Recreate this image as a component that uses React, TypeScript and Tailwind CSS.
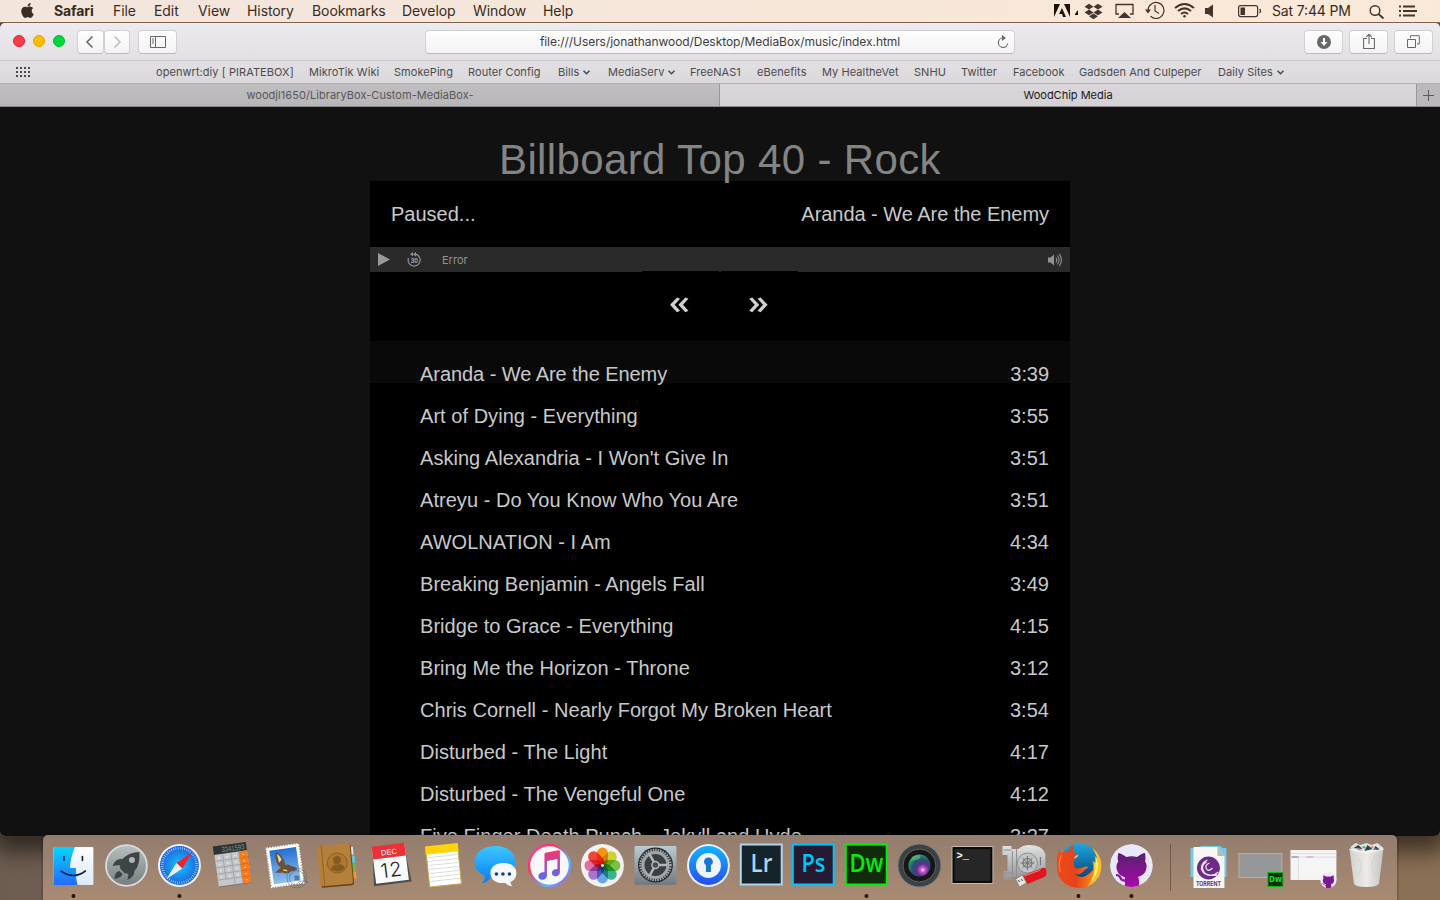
import React from "react";
import { FaApple, FaDropbox } from "react-icons/fa";

const menus = [
  ["File", "w-[41px]"],
  ["Edit", "w-[44px]"],
  ["View", "w-[49px]"],
  ["History", "w-[65px]"],
  ["Bookmarks", "w-[90px]"],
  ["Develop", "w-[71px]"],
  ["Window", "w-[70px]"],
  ["Help", "w-[40px]"],
];

const bookmarks: [string, string, boolean?][] = [
  ["openwrt:diy [ PIRATEBOX]", "w-[153px]"],
  ["MikroTik Wiki", "w-[85px]"],
  ["SmokePing", "w-[74px]"],
  ["Router Config", "w-[90px]"],
  ["Bills", "w-[50px]", true],
  ["MediaServ", "w-[82px]", true],
  ["FreeNAS1", "w-[67px]"],
  ["eBenefits", "w-[65px]"],
  ["My HealtheVet", "w-[92px]"],
  ["SNHU", "w-[47px]"],
  ["Twitter", "w-[52px]"],
  ["Facebook", "w-[66px]"],
  ["Gadsden And Culpeper", "w-[139px]"],
  ["Daily Sites", "w-[70px]", true],
];

const songs = [
  ["Aranda - We Are the Enemy", "3:39"],
  ["Art of Dying - Everything", "3:55"],
  ["Asking Alexandria - I Won't Give In", "3:51"],
  ["Atreyu - Do You Know Who You Are", "3:51"],
  ["AWOLNATION - I Am", "4:34"],
  ["Breaking Benjamin - Angels Fall", "3:49"],
  ["Bridge to Grace - Everything", "4:15"],
  ["Bring Me the Horizon - Throne", "3:12"],
  ["Chris Cornell - Nearly Forgot My Broken Heart", "3:54"],
  ["Disturbed - The Light", "4:17"],
  ["Disturbed - The Vengeful One", "4:12"],
  ["Five Finger Death Punch - Jekyll and Hyde", "3:27"],
];

function MenuBar() {
  return (
    <header className="relative z-10 flex h-[23px] shrink-0 items-center border-b border-[#80634f] bg-linear-to-r from-[#f2e5dc] to-[#fbe9d8] text-[14px] leading-[22px] text-[#3a2b22]">
      <FaApple className="ml-[19px] h-[17px] w-[17px] -translate-y-px" />
      <span className="ml-[18px] w-[59px] whitespace-nowrap font-bold tracking-[-0.100px]">Safari</span>
      {menus.map(([m, w]) => (
        <span key={m} className={`${w} whitespace-nowrap font-normal tracking-[-0.080px]`}>{m}</span>
      ))}
      <svg className="ml-auto" width="387" height="22" viewBox="1053 0 387 22" fill="none" stroke="#44342b">
        <g fill="#1d110b" stroke="none">
          <path d="M1054 4h6l-6 13zM1064 4h6v13zM1062 8l4 9h-3l-1-3h-3z" />
          <path d="M1075 14l3-4v5h-3z" />
        </g>
        <path d="M1119 14h-3V4.500h17V14h-3" strokeWidth="1.300" />
        <path d="M1118 18l6.500-6 6.500 6z" fill="#44342b" stroke="none" />
        <path d="M1148 10a8 8 0 1 1 2.500 6.300M1155 5v6l4 2.500" strokeWidth="1.200" />
        <path d="M1145 9.500h6l-3 4z" fill="#44342b" stroke="none" />
        <path d="M1175 8q9.500-8 19 0M1178 11q6.500-5.300 13 0M1181 14q3.500-3 7 0" strokeWidth="2" />
        <circle cx="1184.500" cy="16.300" r="1.300" fill="#44342b" stroke="none" />
        <path d="M1205 8h3l5-3.500v13l-5-3.500h-3z" fill="#44342b" stroke="none" />
        <rect x="1238.600" y="5.600" width="19" height="11" rx="2" strokeWidth="1.200" />
        <rect x="1240.500" y="7.500" width="4.500" height="7.500" fill="#44342b" stroke="none" />
        <path d="M1259.500 9q2 2 0 4" strokeWidth="1.300" />
        <text x="1272" y="16" fill="#3a2b22" stroke="none" fontSize="14" fontWeight="400" textLength="79">Sat 7:44 PM</text>
        <circle cx="1375" cy="10.500" r="4.800" strokeWidth="1.400" />
        <path d="M1378.500 14l5 4.500" strokeWidth="1.800" />
        <path d="M1399 6.500h2m-2 4.500h2m-2 4.500h2M1403 6.500h12m-12 4.500h14m-14 4.500h12" strokeWidth="2" />
        <FaDropbox x="1084.500" y="2.500" size={18} fill="#44342b" stroke="none" />
      </svg>
    </header>
  );
}

const btn =
  "flex h-[24px] items-center justify-center rounded-[4px] border border-[#d2d0d2] border-b-[#bbb9bb] bg-linear-to-b from-white to-[#f4f3f4]";

function Toolbar() {
  return (
    <div className="flex h-[38px] items-center border-b border-[#c9c7ca] bg-linear-to-b from-[#edebee] to-[#e2e0e3]">
      <div className="-mt-px ml-[13px] flex gap-[8px]">
        <i className="h-[12px] w-[12px] rounded-full border border-[#e5202f] bg-[#ff3b47]" />
        <i className="h-[12px] w-[12px] rounded-full border border-[#e5a200] bg-[#ffbd00]" />
        <i className="h-[12px] w-[12px] rounded-full border border-[#00bd2f] bg-[#00d73c]" />
      </div>
      <div className={`${btn} ml-[12px] w-[26.500px]`}>
        <svg width="10" height="14" viewBox="0 0 10 14" fill="none" stroke="#69676a" strokeWidth="1.600"><path d="M7.500 1.500L2 7l5.500 5.500" /></svg>
      </div>
      <div className={`${btn} w-[26.500px]`}>
        <svg width="10" height="14" viewBox="0 0 10 14" fill="none" stroke="#c0bec1" strokeWidth="1.600"><path d="M2.500 1.500L8 7l-5.500 5.500" /></svg>
      </div>
      <div className={`${btn} ml-[8px] w-[39px]`}>
        <svg width="16" height="12" viewBox="0 0 16 12" fill="none" stroke="#69676a"><path d="M.5.5h15v11H.5zM5.500.5v11M2 3h2M2 5h2M2 7h2" /></svg>
      </div>
      <div className={`${btn} relative ml-[248px] w-[590px] text-[12px] tracking-[-0.060px] text-[#3f3d40]`}>
        file:///Users/jonathanwood/Desktop/MediaBox/music/index.html
        <svg className="absolute right-[5px] top-[4px]" width="13" height="14" viewBox="0 0 13 14" fill="none" stroke="#69676a"><path d="M7 3a4.700 4.700 0 1 0 4.700 5.500" strokeWidth="1.100" /><path d="M6 0l4 3-4 3z" fill="#69676a" stroke="none" /></svg>
      </div>
      <div className={`${btn} ml-auto w-[39px]`}>
        <svg width="14" height="14" viewBox="0 0 14 14"><circle cx="7" cy="7" r="7" fill="#69676a" /><path d="M6 3h2v4h2.500L7 11 3.500 7H6z" fill="white" /></svg>
      </div>
      <div className={`${btn} ml-[6px] w-[39px]`}>
        <svg width="12" height="17" viewBox="0 0 12 17" fill="none" stroke="#69676a"><path d="M4 5.500H.6v10h10.800v-10H8M6 11V1.500M3.200 4L6 1.200 8.800 4" strokeWidth="1.100" /></svg>
      </div>
      <div className={`${btn} ml-[6px] mr-[7px] w-[39px]`}>
        <svg width="13" height="13" viewBox="0 0 13 13" fill="none" stroke="#69676a"><path d="M.5 4.500h8v8h-8zM3.500 3V.7h8.800V9H10" /></svg>
      </div>
    </div>
  );
}

function Favorites() {
  return (
    <div className="flex h-[23px] items-center border-b border-[#b1afb1] bg-linear-to-b from-[#e2e0e3] to-[#dad8db] text-[11px] text-[#4c4a4d]">
      <svg className="ml-[16px] mr-[125px] shrink-0" width="15" height="10" viewBox="0 0 15 10" fill="#4c4a4d">
        {[0, 4, 8].map((y) => [0, 4, 8, 12].map((x) => <rect key={`${x}-${y}`} x={x} y={y} width="2" height="2" />))}
      </svg>
      {bookmarks.map(([t, w, arrow]) => (
        <span key={t} className={`${w} flex shrink-0 items-center gap-[4px] whitespace-nowrap tracking-[0.060px]`}>
          {t}
          {arrow && <svg width="7" height="5" viewBox="0 0 7 5" fill="none" stroke="#4c4a4d" strokeWidth="1.600"><path d="M.5.7l3 3 3-3" /></svg>}
        </span>
      ))}
    </div>
  );
}

function Tabs() {
  return (
    <div className="flex h-[23px] border-b border-[#8a888a] text-[11px] leading-[22px]">
      <div className="w-[720px] border-r border-[#999799] bg-linear-to-b from-[#c0bec0] to-[#b8b6b8] pl-px text-center tracking-[0.050px] text-[#58565a]">woodjl1650/LibraryBox-Custom-MediaBox-</div>
      <div className="flex-1 bg-linear-to-b from-[#d9d7da] to-[#d4d2d5] text-center text-[#19171a]">WoodChip Media</div>
      <div className="flex w-[24px] items-center justify-center border-l border-[#999799] bg-[#bbb9bb]">
        <svg width="11" height="11" viewBox="0 0 11 11" stroke="#5b595c"><path d="M0 5.500h11M5.500 0v11" /></svg>
      </div>
    </div>
  );
}

const navBtn = "-mt-px h-[70px] w-[77px] bg-black pb-[10px] pr-[2px] leading-[60px]";

function Player() {
  return (
    <main className="flex h-[729px] flex-col items-center overflow-hidden rounded-b-[5px] bg-[#111] font-['Liberation_Sans',sans-serif]">
      <h1 className="relative z-10 h-[74px] whitespace-nowrap pt-[29px] text-[42px] leading-[48px] tracking-[0.370px] text-[#848484]">Billboard Top 40 - Rock</h1>
      <section className="w-[700px] bg-black text-[20px] text-[#c9c9c9]">
        <div className="flex h-[66px] justify-between px-[21px] leading-[66px]">
          <span>Paused...</span>
          <span className="tracking-[-0.040px]">Aranda - We Are the Enemy</span>
        </div>
        <div className="flex h-[25px] items-center bg-[#2a2a2a] text-[#929292]">
          <svg className="ml-[8px]" width="12" height="13" viewBox="0 0 12 13" fill="#999"><path d="M0 0l12 6.500L0 13z" /></svg>
          <svg className="ml-[17px] mr-[20px]" width="15" height="15" viewBox="0 0 15 15" fill="none" stroke="#929292">
            <path d="M1.500 6a6 6 0 1 0 7-3.800" strokeWidth="1.200" />
            <path d="M6 0L3 2.200 6 4.400zM9 0L6 2.200l3 2.200z" fill="#929292" stroke="none" />
            <text x="7.300" y="10.500" textAnchor="middle" fill="#a5a5a5" stroke="none" fontSize="6.500" fontWeight="bold">30</text>
          </svg>
          <span className="pt-[2px] font-['Inter',sans-serif] text-[11px]">Error</span>
          <svg className="ml-auto mr-[7px]" width="16" height="14" viewBox="0 0 16 14" fill="none" stroke="#929292">
            <path d="M1 4.500h2.500L7 1.500v11l-3.500-3H1z" fill="#929292" stroke="none" />
            <path d="M8.800 4.500q2 2.500 0 5M10.500 2.500q3 4.500 0 9M12.200.7q4.500 6.300 0 12.600" strokeWidth="1.100" />
          </svg>
        </div>
        <nav className="flex h-[69px] justify-center gap-[2px] font-['Noto_Sans',sans-serif] text-[35px] font-medium text-[#d0d0d0]">
          <button className={navBtn}><span className="inline-block scale-x-[1.120]">«</span></button>
          <button className={navBtn}><span className="inline-block scale-x-[1.120]">»</span></button>
        </nav>
        <ol>
          {songs.map(([t, d], i) => (
            <li key={t} className={`flex h-[42px] justify-between pl-[50px] pr-[21px] pt-[24px] leading-[18px] ${i === 0 ? "bg-[#090909] tracking-[-0.060px]" : "tracking-[0.040px]"}`}>
              <span>{t}</span>
              <span>{d}</span>
            </li>
          ))}
        </ol>
      </section>
    </main>
  );
}

function Slot({ children, running }: { children: React.ReactNode; running?: boolean }) {
  return (
    <svg className="h-[65px] w-[52.900px] shrink-0 overflow-visible" viewBox="-26.5 0 53 65">
      {children}
      {running && <circle cy="61" r="2" fill="#2a130b" />}
    </svg>
  );
}

function Grad({ id, a, b }: { id: string; a: string; b: string }) {
  return (
    <linearGradient id={id} x1="0" y1="0" x2="0" y2="1">
      <stop stopColor={a} />
      <stop offset="1" stopColor={b} />
    </linearGradient>
  );
}

function Adobe({ t, c, bg }: { t: string; c: string; bg: string }) {
  return (
    <>
      <rect x="-20.700" y="9.500" width="41" height="40" fill={bg} stroke={c} strokeWidth="2" />
      <text x="0" y="37.500" textAnchor="middle" fill={c} fontFamily="Open Sans" fontSize="25" fontWeight="600" textLength={t === "Dw" ? 34 : t === "Ps" ? 24 : 22} lengthAdjust="spacingAndGlyphs">{t}</text>
    </>
  );
}

function Cat({ fill }: { fill: string }) {
  return (
    <>
      <path d="M-13-12.500q1-.5 8 4 5-1.300 10.500 0 6.500-4.500 8-4 1 4 .2 8.500Q16.500 0 14 6q-1.800 4-7.500 5.500Q8 13 7.500 20.500L0 22l-6.500-1v-9.200Q-12.500 10-14 6-16.500 0-13.200-4-14.500-8.500-13-12.500z" fill={fill} />
      <path d="M-15.500 9.500q3.500 0 4.500 3 1.500 3 5.500 2.500" fill="none" stroke={fill} strokeWidth="2.200" />
    </>
  );
}

const petals = ["#ff9d10", "#ddda3a", "#7fcf45", "#3dbb97", "#6fb0f0", "#a880d8", "#ee74b0", "#fa4a40"];

function Dock() {
  return (
    <footer className="absolute bottom-0 left-[43px] flex h-[65px] w-[1354px] rounded-t-[5px] bg-linear-to-b from-[#937d6e] to-[#a98b73] pl-[4px] shadow-[0_0_3px_rgba(0,0,0,0.5)]">
      <Slot running>
        <defs><Grad id="fa" a="#07d5ff" b="#246bff" /><Grad id="fb" a="#fdfdff" b="#dfe9f6" /></defs>
        <rect x="-20" y="12" width="40" height="38" rx="1" fill="url(#fb)" />
        <path d="M-20 12H1.500Q-3 23-3.500 33H2.500Q2 42 4 50h-24z" fill="url(#fa)" />
        <path d="M-9.500 21.500v4M9 21.500v4M-12.500 36Q0 45 12 36" fill="none" stroke="#10243e" strokeWidth="1.600" strokeLinecap="round" />
      </Slot>
      <Slot>
        <defs><Grad id="lp" a="#b8c0c2" b="#777d7c" /></defs>
        <circle cy="30.500" r="20.500" fill="url(#lp)" stroke="#d7dcdd" strokeWidth="1.800" />
        <path d="M13 17Q3 17-4 24q-7-1-10 7l7-1 1 4 4 4 4 1-1 6q7-3 7-9Q14 30 13 17z" fill="#3e4446" />
        <circle cx="5.500" cy="25" r="3" fill="#aeb5b6" />
        <path d="M-7 36q-5 1-5 8 7-1 8-5z" fill="#3e4446" />
      </Slot>
      <Slot running>
        <defs><radialGradient id="sg"><stop stopColor="#14c8fa" /><stop offset="1" stopColor="#1d62e0" /></radialGradient></defs>
        <circle cy="30.500" r="21.500" fill="#f2f3f4" />
        <circle cy="30.500" r="19.500" fill="url(#sg)" />
        <circle cy="30.500" r="17.300" fill="none" stroke="#d5edff" strokeWidth="2.500" strokeDasharray=".6 1.600" />
        <path d="M13 17L-3 28 3 33.500z" fill="#f51f31" />
        <path d="M-13 44L-3 28l6 5.500z" fill="#eceef0" />
      </Slot>
      <Slot>
        <g transform="rotate(-8 0 30)">
          <rect x="-16" y="11" width="33" height="39.500" fill="#77777a" />
          <rect x="-16.500" y="10" width="33" height="39.500" fill="#c6c7ca" />
          <rect x="-17" y="9" width="33.500" height="8.500" fill="#2d3434" />
          <rect x="8" y="17.500" width="8.500" height="32" fill="#fb7a17" />
          <path d="M-16.500 24h24.500M-16.500 30.500h24.500M-16.500 37h24.500M-16.500 43h24.500M-8.300 17.500v26M0 17.500v32M8 17.500v32" stroke="#98989c" strokeWidth=".7" />
          <path d="M8 24h8.500M8 30.500h8.500M8 37h8.500M8 43h8.500" stroke="#d45f0c" strokeWidth=".6" />
          <text x="14.500" y="16" textAnchor="end" fontFamily="Liberation Sans" fontSize="7.500" fill="#82928d" textLength="23" lengthAdjust="spacingAndGlyphs">3341593</text>
          {[21, 27.500, 34, 40.500].map((y) => <path key={y} d={`M-13.500 ${y}h2M-5.200 ${y}h2M3 ${y}h2`} stroke="#e4e5e8" strokeWidth="1.500" />)}
          {[21, 27.500, 34, 40.500, 46.500].map((y) => <path key={y} d={`M11.300 ${y}h2`} stroke="#ffdfb5" />)}
        </g>
      </Slot>
      <Slot>
        <defs><Grad id="ml" a="#2470d0" b="#8fc0ee" /></defs>
        <g transform="rotate(-8 0 30)">
          <rect x="-16.500" y="11" width="32" height="39" fill="#fff" stroke="#fff" strokeWidth="2" strokeDasharray="1.500 1.200" />
          <rect x="-14" y="13.500" width="27" height="34" fill="url(#ml)" />
          <path d="M-8 16q4 1 6 6 2 4 2 8 3-1 6 2 4 1 5 4-3 1-6 1-5 3-9 0-4 0-7-1 2-2 6-4-6-6-3-16z" fill="#6b5038" />
          <path d="M-7 18q3 2 4 6l-3 3z" fill="#dfd5c2" />
          <path d="M-3 34.500l4 1.500" stroke="#e8c17b" strokeWidth="1.500" />
        </g>
        <g fill="none" stroke="#565b66" strokeWidth=".8" opacity=".65"><circle cx="11.500" cy="43" r="10" /><circle cx="11.500" cy="43" r="7.500" /><rect x="9.500" y="41" width="4" height="4" fill="#285a9a" /><path d="M12 48q5-4 11 0" /></g>
      </Slot>
      <Slot>
        <g transform="rotate(-5 0 30)">
          <path d="M13 13h4v8h-4z" fill="#dce5e7" /><path d="M13 22h5v7h-5z" fill="#5ac7df" /><path d="M13 30h5v7h-5z" fill="#62bd55" /><path d="M13 38h5v7h-5z" fill="#e69d2d" />
          <rect x="-18" y="10.500" width="33" height="41" rx="2" fill="#704514" />
          <rect x="-19" y="9.500" width="33" height="40.500" rx="2" fill="#b5803b" />
          <path d="M-14.500 9.500v40.500" stroke="#976322" />
          <circle cx="0" cy="28" r="10" fill="#ac7832" stroke="#86581e" strokeWidth=".8" />
          <circle cx="0" cy="25" r="4" fill="#855a24" /><path d="M-7 34q1-4 5-4.500h4q4 .5 5 4.500-6 5-14 0z" fill="#855a24" />
        </g>
      </Slot>
      <Slot>
        <g transform="rotate(-7 0 30)">
          <path d="M-16 13h32l3 36h-38z" fill="#4b4f52" />
          <rect x="-16.500" y="11" width="33" height="36" fill="#fafafa" />
          <rect x="-16.500" y="9.500" width="33" height="13" fill="#ed3038" />
          <text x="0" y="19.500" textAnchor="middle" fontFamily="Liberation Sans" fontSize="7.500" fill="#fff">DEC</text>
          <text x="0" y="42" textAnchor="middle" fontSize="20" fontWeight="300" fill="#202020" textLength="21">12</text>
        </g>
      </Slot>
      <Slot>
        <g transform="rotate(-6 0 30)">
          <rect x="-16" y="10.500" width="32" height="40" fill="#fff" stroke="#c5a64d" />
          <rect x="-16.500" y="9.500" width="33" height="8.500" fill="#ffd30a" />
          {[21, 25, 29, 33, 37, 41, 45].map((y) => <path key={y} d={`M-15 ${y}h30`} stroke="#dcdcdc" />)}
        </g>
      </Slot>
      <Slot>
        <defs><Grad id="ms" a="#3cc7ff" b="#087cf4" /></defs>
        <path d="M-1 11c13 0 20 7 20 17S10 43-1 43q-3 0-5-.500-3 5-9 6 4-3 3-8-10-4-10-13c0-10 9-16.500 21-16.500z" fill="url(#ms)" />
        <path d="M7 28c8 0 13 4 13 10 0 5-3 8-6 9 0 2 1 3 2 4-4 0-6-2-7-3-9 1-15-3-15-10 0-6 5-10 13-10z" fill="#f4f8fc" />
        <g fill="#123e80"><circle cx="0" cy="39" r="1.800" /><circle cx="6.500" cy="39" r="1.800" /><circle cx="13" cy="39" r="1.800" /></g>
      </Slot>
      <Slot>
        <defs><linearGradient id="it" x1="0" y1="0" x2="1" y2="1"><stop stopColor="#ff42ab" /><stop offset=".3" stopColor="#ff315e" /><stop offset=".7" stopColor="#54b9fa" /><stop offset="1" stopColor="#b946ec" /></linearGradient><Grad id="nt" a="#ff3168" b="#516cff" /></defs>
        <circle cy="30.500" r="20.500" fill="#f8f8fa" stroke="url(#it)" strokeWidth="2.400" />
        <path d="M-5 19q0-1 1-1.300l13-2.400q1.500 0 1.500 1v20.700c0 5-8 6-8 1 0-3 3-4 5.500-4V24L-2.500 26v14.500c0 5-8.500 6-8.500 1 0-4 3.500-4 6-4.500z" fill="url(#nt)" />
      </Slot>
      <Slot>
        <circle cy="30.500" r="21.500" fill="#f3f1f2" />
        <g className="isolate">
          <circle cy="30.500" r="18" fill="#f3f1f2" />
          {petals.map((c, i) => <rect key={c} className="mix-blend-multiply" x="-5.500" y="12.500" width="11" height="18" rx="5.500" fill={c} transform={`rotate(${i * 45} 0 30.500)`} />)}
        </g>
        <circle cy="30.500" r="1.500" fill="#fff" />
      </Slot>
      <Slot>
        <defs><Grad id="sy" a="#b9cbd3" b="#727a7d" /></defs>
        <rect x="-21" y="11" width="42" height="39" rx="1" fill="url(#sy)" />
        <circle cy="30" r="17.500" fill="#252a2c" />
        <circle cy="30" r="15" fill="none" stroke="#a5a9ab" strokeWidth="2.500" strokeDasharray="1.500 1" />
        <circle cy="30" r="12.500" fill="#3a3f41" stroke="#a2a6a8" strokeWidth="3" />
        <path d="M0 30l12 0M0 30L-6 19M0 30l-6 11" stroke="#b4b8ba" strokeWidth="2.500" />
        <circle cy="30" r="3.500" fill="#4a4e50" stroke="#b4b8ba" strokeWidth="1.500" />
      </Slot>
      <Slot>
        <defs><Grad id="op" a="#12b4ff" b="#264df4" /></defs>
        <circle cy="30.500" r="21.500" fill="#edf1f7" /><circle cy="30.500" r="19.500" fill="url(#op)" /><circle cy="30.500" r="12.500" fill="#eef4fb" />
        <path d="M-4.500 27a4.500 4.500 0 1 1 9 0q0 2-2 3v7h-5v-7q-2-1-2-3z" fill="#1875d2" />
      </Slot>
      <Slot><Adobe t="Lr" c="#add5ec" bg="#14242a" /></Slot>
      <Slot><Adobe t="Ps" c="#00c5fb" bg="#251a31" /></Slot>
      <Slot running><Adobe t="Dw" c="#00ef0b" bg="#102b0a" /></Slot>
      <Slot>
        <defs><radialGradient id="lens" cx=".65" cy=".7" r=".7"><stop stopColor="#fff" /><stop offset=".15" stopColor="#d453cf" /><stop offset=".4" stopColor="#5a2f8a" /><stop offset=".7" stopColor="#24566f" /><stop offset="1" stopColor="#2d9a62" /></radialGradient></defs>
        <circle cy="30.500" r="21.500" fill="#3e4143" stroke="#777a7b" /><circle cy="30.500" r="16.500" fill="#151718" stroke="#606365" /><circle cy="30.500" r="11" fill="url(#lens)" />
        <path d="M-9 26q2-7 10-6l-1 4z" fill="#65bd8a" opacity=".6" />
      </Slot>
      <Slot>
        <rect x="-21" y="11" width="42" height="38" rx="1" fill="#c2b9b0" />
        <rect x="-20" y="12" width="40" height="36" fill="#090909" /><rect x="-18" y="14" width="36" height="32" fill="#262626" />
        <text x="-16" y="24" fontFamily="Liberation Mono" fontWeight="bold" fontSize="10.500" fill="#fff">&gt;_</text>
      </Slot>
      <Slot>
        <defs><Grad id="vt" a="#e2e3e3" b="#919394" /></defs>
        <path d="M-23 11h9v3h7q4-4 11-4 13 0 16 9v22q-3 4-12 4h-15v-3h-7v3h-8v-9h4v-16h-5z" fill="url(#vt)" />
        <path d="M-13 16v24M-9 14v29M-22 15h8M-22 38h8" stroke="#8b8e8f" fill="none" />
        <circle cx="2" cy="28" r="10" fill="#c2c4c4" stroke="#8b8e8f" /><circle cx="2" cy="28" r="4.500" fill="none" stroke="#6c7072" strokeWidth="1.200" />
        <path d="M-5 28h14M2 21v14M-3 23l10 10M-3 33l10-10M15 22v8" stroke="#6c7072" />
        <path d="M-3 41l20-8q3-1 4 2v4q0 2-2 3L2 49z" fill="#df161e" /><path d="M-1 41l16-6" stroke="#ff7773" />
        <path d="M-10 44l7-4 4 8-7 4z" fill="#e6e6e4" stroke="#888" /><path d="M-7 45l1 2m2-3l1 2" stroke="#333" />
      </Slot>
      <Slot running>
        <defs><Grad id="fx" a="#1fa5dc" b="#07366f" /><linearGradient id="fy"><stop stopColor="#f04a1c" /><stop offset=".5" stopColor="#e5431a" /><stop offset="1" stopColor="#fb8c1a" /></linearGradient></defs>
        <circle cx="1" cy="28.500" r="20" fill="url(#fx)" />
        <path d="M14 13q9 7 9 18-1 20-22 21.300 14-5 14-19 1-4-1-7 4 1 5 5 1-9-5-18.300z" fill="#fdbf2d" />
        <path d="M17 21q4 6 2 15-4 11-13 15 10-8 11-18z" fill="#fff06a" />
        <path d="M-19 13q0 4 2 6 3-3 7-2 1-5 5-7-2 5 1 8 2 2 4 2-1 3-4 4-2 6 1 9 5 1 8-1 3-1 5 0-2 2-4 3-4 6-10 4 5 5 11 2 6-3 9-8-1 13-8 19-3 1-7 1-20-1-22.500-19-.500-12 2.500-21z" fill="url(#fy)" />
        <path d="M-4 22q2-2 4-2-1 3-4 3.500z" fill="#ffd9a0" />
        <path d="M-17 20q-4 9-1 17" fill="none" stroke="#ff8b3c" strokeWidth="1.500" opacity=".7" />
      </Slot>
      <Slot running>
        <defs><linearGradient id="gh" gradientUnits="userSpaceOnUse" x1="0" y1="-13" x2="0" y2="21"><stop stopColor="#54226b" /><stop offset="1" stopColor="#a808ae" /></linearGradient><clipPath id="ghc"><circle cy="0" r="21.500" /></clipPath></defs>
        <g transform="translate(0 30.500)" clipPath="url(#ghc)">
          <circle r="21.500" fill="#e8e8fa" />
          <Cat fill="url(#gh)" />
        </g>
      </Slot>
      <div className="ml-[12px] mr-[11px] mt-[9px] h-[47px] w-px shrink-0 bg-[#735a4a]" />
      <Slot>
        <path d="M-18 13h10v-2h20l2 2h4v29h-36z" fill="#70ccea" />
        <path d="M-15 12H9l7 9v32h-31z" fill="#f7f7f7" /><path d="M9 12v9h7z" fill="#b8b8b8" />
        <circle cy="33" r="11.500" fill="#6c2b88" />
        <path d="M10 37q-7 6-14 1-5-7 2-11M9 40q-14 2-16-6 0-7 6-9M4 33q-4 4-6 1-2-4 3-6" fill="none" stroke="#eee2f3" strokeWidth="1.300" />
        <text y="51" textAnchor="middle" fontSize="5.800" fontWeight="bold" fill="#67307c" textLength="25" lengthAdjust="spacingAndGlyphs">TORRENT</text>
      </Slot>
      <Slot>
        <rect x="-22.500" y="18.500" width="43" height="24" fill="#969798" stroke="#b5b0ab" />
        <rect x="6.500" y="37.500" width="15" height="14" fill="#092b08" stroke="#08bd18" /><text x="14" y="47.500" textAnchor="middle" fontFamily="Open Sans" fontWeight="bold" fontSize="8" fill="#16eb24">Dw</text>
      </Slot>
      <Slot>
        <rect x="-23" y="15" width="46" height="30" fill="#f5f5f5" /><path d="M-23 18.500h46M-23 22h46M-15 23v22" stroke="#dcdcdf" /><path d="M-22 22h7" stroke="#777" /><path d="M-7 22h7" stroke="#d284d5" />
        <g transform="translate(15 45) scale(.38)"><circle r="21.500" fill="#eeeafa" /><Cat fill="#7b188f" /></g>
      </Slot>
      <Slot>
        <defs><linearGradient id="tr"><stop stopColor="#d2d4d4" /><stop offset=".5" stopColor="#f1f1ef" /><stop offset="1" stopColor="#c5c6c4" /></linearGradient></defs>
        <path d="M-16 12l5-4 5 2 6-2 5 2 6-2 6 5-3 6h-27z" fill="#dfe2df" />
        <path d="M-13 13l5-3 4 4zM1 10l5 4-8 2zM9 11l5 4h-7z" fill="#344247" /><path d="M-5 12l4-1v3zM6 15l4-2v2z" fill="#31aeb8" /><path d="M-9 15h4M4 12h3" stroke="#c85539" />
        <path d="M-17 14q17 5 34 0L12.500 49q-2 3-12.500 3t-12.500-3z" fill="url(#tr)" opacity=".95" />
        <path d="M-9 22l4 8-2 10M8 21L5 31l3 10" stroke="#c5c7c7" fill="none" opacity=".5" />
        <path d="M-17 14q17 5 34 0" stroke="#fff" fill="none" />
      </Slot>
    </footer>
  );
}

export default function App() {
  return (
    <div className="relative flex h-[900px] w-[1440px] flex-col overflow-hidden bg-linear-to-r from-[#6d5d50] via-[#7e6652] to-[#8a7054] font-['Inter',sans-serif]">
      <MenuBar />
      <div className="overflow-hidden rounded-[5px] shadow-[0_8px_22px_8px_rgba(0,0,0,0.55)]">
        <Toolbar />
        <Favorites />
        <Tabs />
        <Player />
      </div>
      <Dock />
    </div>
  );
}
